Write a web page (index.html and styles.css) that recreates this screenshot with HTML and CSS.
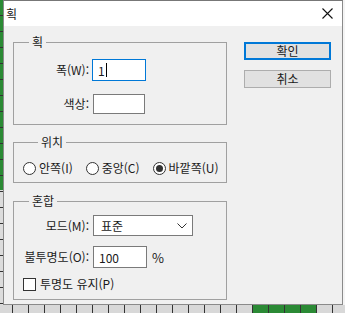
FILE: index.html
```html
<!DOCTYPE html>
<html lang="ko">
<head>
    <meta charset="utf-8" />
    <meta name="viewport" content="width=device-width, initial-scale=1.0">
    <link rel="stylesheet" href="styles.css">
    <title>획</title>
</head>
<body>
    <div class="screen">
        <div class="side-ruler"></div>

        <div class="dialog">
            <div class="titlebar">
                <span class="title">획</span>
                <svg class="close" width="11" height="11" viewBox="0 0 11 11">
                    <path d="M0.5 0.5 L10.5 10.5 M10.5 0.5 L0.5 10.5" stroke="#111" stroke-width="1.1" fill="none"/>
                </svg>
            </div>

            <div class="content">
                <div class="groups">
                    <fieldset class="group group-stroke">
                        <legend>획</legend>
                        <div class="form-grid">
                            <label for="width">폭(W):</label>
                            <div class="field focused"><span>1</span><i class="caret"></i></div>

                            <label>색상:</label>
                            <div class="field swatch"></div>
                        </div>
                    </fieldset>

                    <fieldset class="group group-position">
                        <legend>위치</legend>
                        <div class="radios">
                            <span class="radio-item"><i class="radio"></i>안쪽(I)</span>
                            <span class="radio-item"><i class="radio"></i>중앙(C)</span>
                            <span class="radio-item"><i class="radio checked"></i>바깥쪽(U)</span>
                        </div>
                    </fieldset>

                    <fieldset class="group group-blend">
                        <legend>혼합</legend>
                        <div class="form-grid blend-grid">
                            <label>모드(M):</label>
                            <div class="select">
                                <span>표준</span>
                                <svg width="10" height="6" viewBox="0 0 10 6">
                                    <path d="M0.5 0.5 L5 5 L9.5 0.5" stroke="#333" stroke-width="1" fill="none"/>
                                </svg>
                            </div>

                            <label>불투명도(O):</label>
                            <div class="opacity-row">
                                <div class="field"><span>100</span></div>
                                <span class="unit">%</span>
                            </div>
                        </div>
                        <div class="check-row">
                            <i class="checkbox"></i>투명도 유지(P)
                        </div>
                    </fieldset>
                </div>

                <div class="buttons">
                    <button class="btn primary">확인</button>
                    <button class="btn">취소</button>
                </div>
            </div>
        </div>

        <div class="side-right"></div>
        <div class="bottom-ruler"></div>
    </div>
</body>
</html>
```

FILE: styles.css
```css
body {
    margin: 0;
    font-family: "Noto Sans CJK KR", "Noto Sans", sans-serif;
    font-size: 12px;
    color: #1a1a1a;
    background: #e8e8e8;
}

.screen {
    width: 345px;
    height: 313px;
    display: grid;
    grid-template-columns: 3px 340px 2px;
    grid-template-rows: 305px 8px;
    overflow: hidden;
}

.side-ruler {
    background:
        repeating-linear-gradient(to bottom, transparent 0 15px, #333 15px 16px),
        linear-gradient(to bottom, #2b8a35 0 190px, #dcdcdc 190px);
}

.side-right {
    background: #f4f4f4;
}

.bottom-ruler {
    grid-column: 1 / 4;
    background:
        repeating-linear-gradient(to right, transparent 0 12px, #333 12px 13px, transparent 13px 16px),
        linear-gradient(to right, #d8d8d8 0 252px, #2b8a35 252px 317px, #d8d8d8 317px);
    background-size: 100% 100%;
}

.dialog {
    background: #f0f0f0;
    border: 1px solid #8a8a8a;
    border-top-color: #777;
    display: flex;
    flex-direction: column;
}

.titlebar {
    height: 25px;
    background: #fff;
    display: flex;
    align-items: center;
    justify-content: space-between;
    padding: 0 9px 0 2px;
}

.title {
    font-size: 12px;
    line-height: 14px;
}

.content {
    display: flex;
    padding: 0 10px 0 9px;
    gap: 17px;
}

.groups {
    width: 214px;
}

.group {
    margin: 0;
    padding: 0;
    border: 1px solid #a0a0a0;
    min-width: 0;
}

.group legend {
    margin-left: 15px;
    padding: 0 3px;
    line-height: 16px;
    height: 16px;
}

.group-stroke {
    margin-top: 8px;
    padding-top: 9px;
    padding-bottom: 10px;
}

.form-grid {
    display: grid;
    grid-template-columns: 75px auto;
    column-gap: 3px;
    row-gap: 13px;
    align-items: center;
}

.form-grid label {
    text-align: right;
    line-height: 16px;
}

.field {
    box-sizing: border-box;
    width: 54px;
    height: 22px;
    background: #fff;
    border: 1px solid #7a7a7a;
    display: flex;
    align-items: center;
    padding-left: 5px;
}

.field.focused {
    border-color: #0078d7;
}

.caret {
    display: inline-block;
    width: 1px;
    height: 14px;
    background: #000;
    margin-left: 1px;
}

.swatch {
    width: 52px;
    height: 20px;
    margin-left: 1px;
}

.group-position {
    margin-top: 9px;
    padding: 10px 0 6px 9px;
}

.radios {
    display: flex;
    gap: 13px;
    line-height: 16px;
}

.radio-item {
    display: flex;
    align-items: center;
    gap: 3px;
}

.radio {
    box-sizing: border-box;
    width: 13px;
    height: 13px;
    border: 1px solid #333;
    border-radius: 50%;
    background: #fff;
    display: flex;
    align-items: center;
    justify-content: center;
}

.radio.checked::after {
    content: "";
    width: 7px;
    height: 7px;
    border-radius: 50%;
    background: #333;
}

.group-blend {
    margin-top: 10px;
    padding-top: 6px;
    padding-bottom: 8px;
}

.blend-grid {
    column-gap: 4px;
    row-gap: 10px;
}

.select {
    box-sizing: border-box;
    width: 100px;
    height: 21px;
    background: #fff;
    border: 1px solid #7a7a7a;
    display: flex;
    align-items: center;
    justify-content: space-between;
    padding: 0 5px 0 7px;
}

.opacity-row {
    display: flex;
    align-items: center;
    gap: 5px;
}

.unit {
    font-size: 13px;
}

.check-row {
    display: flex;
    align-items: center;
    gap: 4px;
    margin: 9px 0 0 9px;
    line-height: 14px;
}

.checkbox {
    box-sizing: border-box;
    width: 13px;
    height: 13px;
    border: 1px solid #333;
    background: #fff;
}

.buttons {
    display: flex;
    flex-direction: column;
    gap: 10px;
    padding-top: 16px;
}

.btn {
    box-sizing: border-box;
    width: 87px;
    height: 18px;
    font-family: inherit;
    font-size: 12px;
    line-height: 14px;
    color: #1a1a1a;
    background: #e1e1e1;
    border: 1px solid #adadad;
    padding: 0;
}

.btn.primary {
    border: 2px solid #0078d7;
}
```
